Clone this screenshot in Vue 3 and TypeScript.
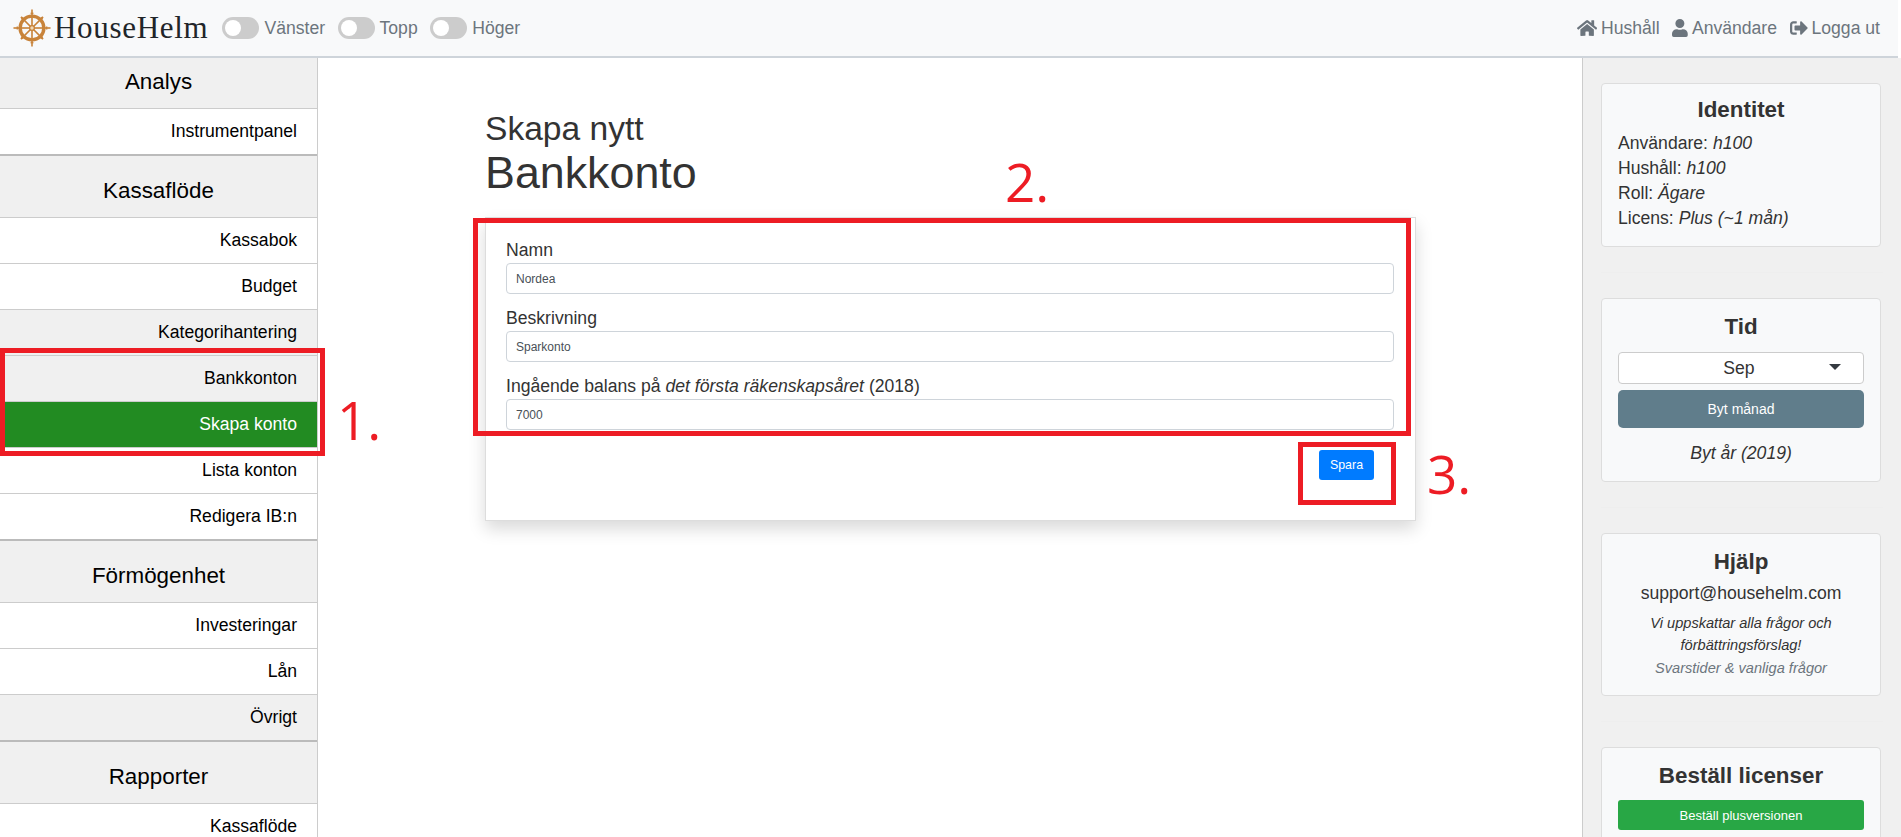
<script setup lang="ts">
interface Row { label: string; tone?: 'grey' | 'active' }
interface Group { title: string; rows: Row[] }

const groups: Group[] = [
  { title: 'Analys', rows: [{ label: 'Instrumentpanel' }] },
  {
    title: 'Kassaflöde',
    rows: [
      { label: 'Kassabok' },
      { label: 'Budget' },
      { label: 'Kategorihantering', tone: 'grey' },
      { label: 'Bankkonton', tone: 'grey' },
      { label: 'Skapa konto', tone: 'active' },
      { label: 'Lista konton' },
      { label: 'Redigera IB:n' },
    ],
  },
  {
    title: 'Förmögenhet',
    rows: [{ label: 'Investeringar' }, { label: 'Lån' }, { label: 'Övrigt', tone: 'grey' }],
  },
  { title: 'Rapporter', rows: [{ label: 'Kassaflöde' }] },
]

const spokes = [0, 45, 90, 135, 180, 225, 270, 315]
</script>

<template>
  <div class="page">
    <header class="topbar">
      <div class="brand">
        <svg class="wheel" viewBox="0 0 40 40" aria-hidden="true">
          <g stroke="#c8833a" fill="none">
            <g v-for="a in spokes" :key="a" :transform="`rotate(${a} 20 20)`">
              <path :d="a % 90 === 0 ? 'M20 20V0.500' : 'M20 20V3.500'" stroke-width="1.700" />
              <path :d="a % 90 === 0 ? 'M18.500 4.500h3' : 'M18.500 5.500h3'" stroke-width="1.400" />
            </g>
            <circle cx="20" cy="20" r="12.500" stroke-width="3.600" />
            <circle cx="20" cy="20" r="2.500" fill="#f0d9b8" stroke-width="1.400" />
          </g>
        </svg>
        <span class="brand-name">HouseHelm</span>
      </div>
      <div class="toggles">
        <label class="toggle"><span class="switch"></span>Vänster</label>
        <label class="toggle"><span class="switch"></span>Topp</label>
        <label class="toggle"><span class="switch"></span>Höger</label>
      </div>
      <nav class="usernav">
        <a>
          <svg viewBox="0 0 576 512" aria-hidden="true"><path d="M280.4 148.3 96 300.1V464a16 16 0 0 0 16 16l112-.3a16 16 0 0 0 15.9-16V368a16 16 0 0 1 16-16h64a16 16 0 0 1 16 16v95.6a16 16 0 0 0 16 16.1L464 480a16 16 0 0 0 16-16V300L295.7 148.3a12.2 12.2 0 0 0-15.3 0zM571.6 251.5 488 182.6V44a12 12 0 0 0-12-12h-56a12 12 0 0 0-12 12v72.6L318.5 43a48 48 0 0 0-61 0L4.3 251.5a12 12 0 0 0-1.6 16.9l25.5 31A12 12 0 0 0 45.2 301l235.2-193.7a12.2 12.2 0 0 1 15.3 0L530.9 301a12 12 0 0 0 16.9-1.6l25.5-31a12 12 0 0 0-1.7-16.9z"/></svg>
          Hushåll
        </a>
        <a>
          <svg viewBox="0 0 448 512" aria-hidden="true"><path d="M224 256a128 128 0 1 0 0-256 128 128 0 0 0 0 256zm89.6 32h-16.7a174 174 0 0 1-145.8 0h-16.7A134.4 134.4 0 0 0 0 422.4V464a48 48 0 0 0 48 48h352a48 48 0 0 0 48-48v-41.6A134.4 134.4 0 0 0 313.6 288z"/></svg>
          Användare
        </a>
        <a>
          <svg viewBox="0 0 512 512" aria-hidden="true"><path d="M497 273 329 441c-15 15-41 4.500-41-17v-96H152c-13.300 0-24-10.700-24-24v-96c0-13.300 10.700-24 24-24h136V88c0-21.400 25.900-32 41-17l168 168c9.300 9.400 9.300 24.600 0 34zM192 436v-40c0-6.600-5.400-12-12-12H96c-17.700 0-32-14.300-32-32V160c0-17.700 14.300-32 32-32h84c6.600 0 12-5.400 12-12V76c0-6.600-5.400-12-12-12H96c-53 0-96 43-96 96v192c0 53 43 96 96 96h84c6.600 0 12-5.400 12-12z"/></svg>
          Logga ut
        </a>
      </nav>
    </header>

    <div class="body">
      <aside class="leftnav">
        <section v-for="g in groups" :key="g.title" class="group">
          <h2 class="group-title">{{ g.title }}</h2>
          <a v-for="r in g.rows" :key="r.label" class="row" :class="r.tone">{{ r.label }}</a>
        </section>
      </aside>

      <main class="content">
        <div class="heading">
          <p class="heading-small">Skapa nytt</p>
          <h1 class="heading-big">Bankkonto</h1>
        </div>
        <form class="card" @submit.prevent>
          <div class="field">
            <label>Namn</label>
            <input value="Nordea" />
          </div>
          <div class="field">
            <label>Beskrivning</label>
            <input value="Sparkonto" />
          </div>
          <div class="field">
            <label>Ingående balans på <em>det första räkenskapsåret</em> (2018)</label>
            <input value="7000" />
          </div>
          <div class="actions">
            <button class="save" type="submit">Spara</button>
          </div>
        </form>
      </main>

      <aside class="rightbar">
        <section class="panel identity">
          <h3>Identitet</h3>
          <p>Användare: <em>h100</em></p>
          <p>Hushåll: <em>h100</em></p>
          <p>Roll: <em>Ägare</em></p>
          <p>Licens: <em>Plus (~1 mån)</em></p>
        </section>
        <hr />
        <section class="panel time">
          <h3>Tid</h3>
          <div class="select"><span>Sep</span><i class="caret"></i></div>
          <button class="wide slate">Byt månad</button>
          <p class="year"><em>Byt år (2019)</em></p>
        </section>
        <hr />
        <section class="panel help">
          <h3>Hjälp</h3>
          <p class="mail">support@househelm.com</p>
          <p class="note"><em>Vi uppskattar alla frågor och<br />förbättringsförslag!</em></p>
          <p class="muted"><em>Svarstider &amp; vanliga frågor</em></p>
        </section>
        <hr />
        <section class="panel order">
          <h3>Beställ licenser</h3>
          <button class="wide green">Beställ plusversionen</button>
        </section>
      </aside>
    </div>

    <div class="mark mark-1"></div>
    <div class="mark mark-2"></div>
    <div class="mark mark-3"></div>
    <span class="num num-1">1.</span>
    <span class="num num-2">2.</span>
    <span class="num num-3">3.</span>
  </div>
</template>

<style>
html, body { margin: 0; height: 100%; overflow: hidden; background: #fff; }
</style>

<style scoped>
.page {
  position: relative;
  width: 1901px;
  height: 837px;
  overflow: hidden;
  font-family: "Liberation Sans", Arial, sans-serif;
  font-size: 17.6px;
  color: #333;
  background: #fff;
}
.topbar {
  box-sizing: border-box;
  height: 58px;
  width: 1898px;
  display: flex;
  align-items: center;
  padding: 0 18px 0 13px;
  background: #f8f9fa;
  border-bottom: 2px solid #ced4da;
}
.brand { display: flex; align-items: center; }
.wheel { width: 38px; height: 38px; margin-right: 3px; }
.brand-name {
  font-family: "Liberation Serif", "Times New Roman", serif;
  font-size: 31px;
  letter-spacing: .7px;
  color: #212529;
}
.toggles { display: flex; margin-left: 14px; }
.toggle {
  display: flex;
  align-items: center;
  color: #6c757d;
  margin-right: 12.5px;
}
.switch {
  position: relative;
  width: 37px;
  height: 22px;
  border-radius: 11px;
  background: #ccc;
  margin-right: 5px;
}
.switch::before {
  content: "";
  position: absolute;
  left: 3px;
  top: 3px;
  width: 16px;
  height: 16px;
  border-radius: 50%;
  background: #fff;
}
.usernav { margin-left: auto; display: flex; gap: 12.5px; color: #6c757d; }
.usernav a { display: flex; align-items: center; gap: 4px; white-space: nowrap; }
.usernav svg { height: 18px; width: auto; fill: #6c757d; }

.body { display: flex; height: 779px; }

.leftnav {
  width: 318px;
  flex: none;
  box-sizing: border-box;
  border-right: 1px solid #ccc;
  overflow: hidden;
}
.group { border-bottom: 2px solid #bbb; }
.group-title {
  margin: 0;
  box-sizing: border-box;
  height: 62px;
  padding-top: 20px;
  text-align: center;
  font-size: 22.4px;
  font-weight: 400;
  line-height: 30px;
  color: #000;
  background: #f0f0f0;
  border-bottom: 1px solid #ccc;
}
.group:first-child .group-title { height: 51px; padding-top: 9px; }
.row {
  display: block;
  box-sizing: border-box;
  height: 46px;
  padding: 10px 20px 0 0;
  text-align: right;
  line-height: 24px;
  color: #000;
  background: #fff;
  border-bottom: 1px solid #ccc;
}
.row:last-child { height: 45px; border-bottom: 0; }
.row.grey { background: #f0f0f0; }
.row.active { background: #228b22; color: #fff; }

.content { flex: 1; min-width: 0; padding: 52px 0 0 167px; }
.heading-small { margin: 0; font-size: 33.6px; line-height: 38px; }
.heading-big { margin: 0; font-size: 44.8px; font-weight: 400; line-height: 48px; }
.card {
  box-sizing: border-box;
  width: 931px;
  height: 304px;
  margin-top: 21px;
  padding: 21px 21px 0 20px;
  border: 1px solid #ddd;
  box-shadow: 0 8px 16px rgba(0, 0, 0, .15);
  background: #fff;
}
.field { margin-bottom: 13px; }
.field label { display: block; line-height: 23px; margin-bottom: 1px; }
.field input {
  display: block;
  box-sizing: border-box;
  width: 100%;
  height: 31px;
  padding: 0 9px;
  border: 1px solid #ced4da;
  border-radius: 4px;
  font: 12px "Liberation Sans", Arial, sans-serif;
  color: #495057;
  outline: none;
}
.actions { display: flex; justify-content: flex-end; margin-top: 20px; padding-right: 20px; }
.save {
  width: 55px;
  height: 30px;
  border: 0;
  border-radius: 3px;
  background: #007bff;
  color: #fff;
  font: 12.4px "Liberation Sans", Arial, sans-serif;
  padding: 0;
}

.rightbar {
  width: 319px;
  flex: none;
  box-sizing: border-box;
  padding: 25px 18px 0 18px;
  background: #f0f0f0;
  border-left: 1px solid #ccc;
  overflow: hidden;
}
.rightbar hr { border: 0; border-top: 1px solid #eee; margin: 25px 0; }
.panel {
  box-sizing: border-box;
  width: 280px;
  padding: 16px;
  background: #f8f9fa;
  border: 1px solid #ddd;
  border-radius: 4px;
}
.panel h3 {
  margin: 0;
  text-align: center;
  font-size: 22.4px;
  line-height: 24px;
  font-weight: 700;
  color: #333;
}
.panel p { margin: 0; }
.identity { height: 164px; padding-top: 14px; }
.identity h3 { margin-bottom: 9px; }
.identity p { line-height: 25px; }
.time { height: 184px; }
.time h3 { margin-bottom: 13px; }
.select {
  position: relative;
  box-sizing: border-box;
  height: 32px;
  border: 1px solid #ccc;
  border-radius: 4px;
  background: #fff;
  text-align: center;
  line-height: 30px;
}
.select span { margin-left: -4px; }
.caret {
  position: absolute;
  right: 22px;
  top: 11px;
  border-left: 6px solid transparent;
  border-right: 6px solid transparent;
  border-top: 6px solid #343a40;
}
.wide {
  display: block;
  width: 100%;
  border: 0;
  color: #fff;
  font: 13px "Liberation Sans", Arial, sans-serif;
}
.slate { height: 38px; margin-top: 6px; background: #607d8b; border-radius: 5px; font-size: 14px; }
.panel .year { margin-top: 13px; text-align: center; line-height: 24px; }
.help { height: 163px; text-align: center; }
.panel .mail { font-size: 17.6px; line-height: 24px; margin-top: 7px; }
.panel .note { font-size: 14.6px; line-height: 22px; margin-top: 7px; }
.panel .muted { font-size: 14.6px; line-height: 24px; color: #6c757d; }
.order { height: 120px; }
.order h3 { margin-bottom: 12px; }
.green { height: 30px; background: #28a745; border-radius: 3px; }

.mark { position: absolute; box-sizing: border-box; border: 5px solid #ed1c24; }
.mark-1 { left: 0; top: 348px; width: 325px; height: 108px; }
.mark-2 { left: 473px; top: 218px; width: 938px; height: 218px; }
.mark-3 { left: 1298px; top: 442px; width: 98px; height: 63px; }
.num {
  position: absolute;
  font-family: "Open Sans", sans-serif;
  font-size: 53px;
  line-height: 60px;
  color: #ed1c24;
}
.num-1 { left: 337px; top: 390px; }
.num-2 { left: 1005px; top: 152px; }
.num-3 { left: 1427px; top: 444px; }
</style>
